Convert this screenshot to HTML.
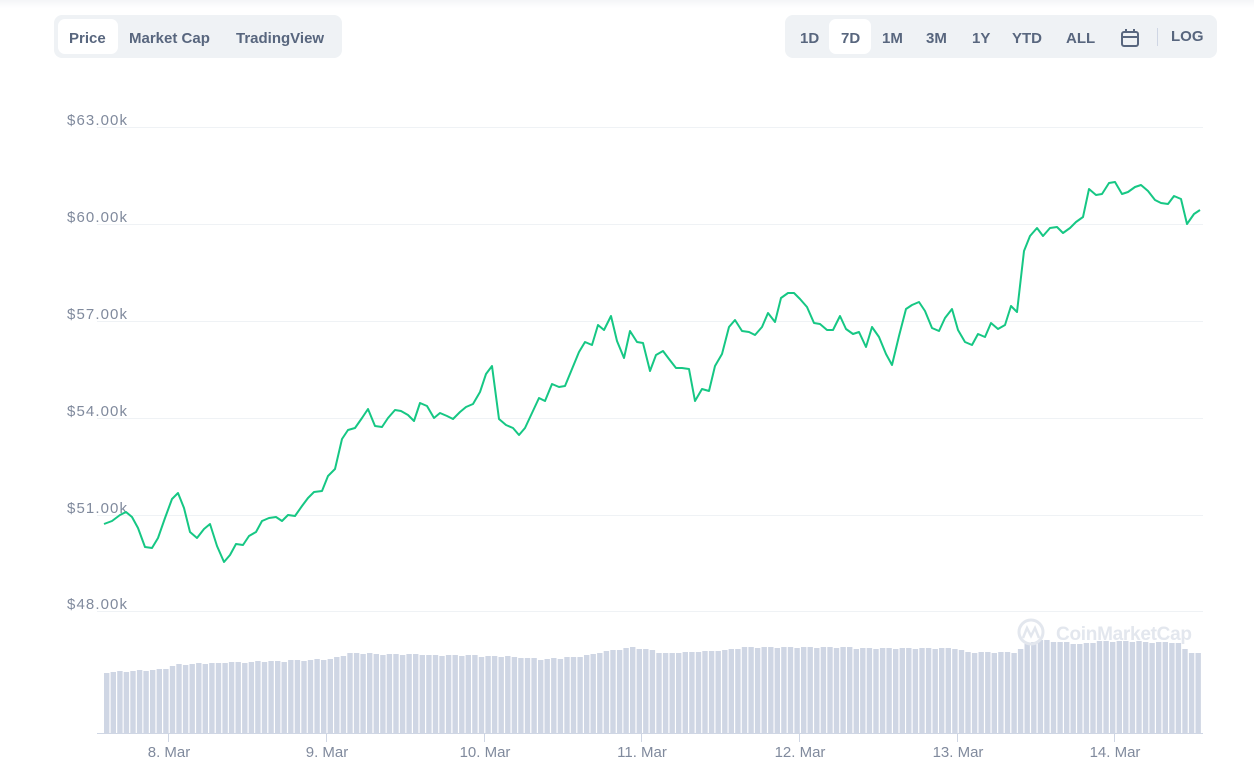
<!DOCTYPE html>
<html><head><meta charset="utf-8"><style>
body{margin:0;width:1254px;height:783px;background:#fff;font-family:"Liberation Sans",sans-serif;overflow:hidden;position:relative}
.top{position:absolute;left:0;top:0;width:1254px;height:8px;background:linear-gradient(#f4f5f7,#fff)}
.grp{position:absolute;top:15px;height:43px;background:#eff2f5;border-radius:8px}
.b{position:absolute;top:6px;font-size:15px;font-weight:bold;color:#58667e;height:35px;line-height:35px;border-radius:6px;text-align:center}
.on{position:absolute;top:4px;height:35px;background:#fff;border-radius:7px}
</style></head><body>
<div class="top"></div>
<div class="grp" style="left:54px;width:288px">
<div class="on" style="left:4px;width:60px"></div>
<div class="b" style="left:15px">Price</div><div class="b" style="left:75px">Market Cap</div><div class="b" style="left:182px">TradingView</div></div>
<div class="grp" style="left:785px;width:432px">
<div class="on" style="left:44px;width:42px"></div>
<div class="b" style="left:15px">1D</div><div class="b" style="left:56px">7D</div><div class="b" style="left:97px">1M</div><div class="b" style="left:141px">3M</div><div class="b" style="left:187px">1Y</div><div class="b" style="left:227px">YTD</div><div class="b" style="left:281px">ALL</div>
<svg width="22" height="22" viewBox="0 0 22 22" style="position:absolute;left:334px;top:12px"><rect x="3" y="5" width="16" height="14" rx="2" fill="none" stroke="#58667e" stroke-width="2"/><line x1="3" y1="10" x2="19" y2="10" stroke="#58667e" stroke-width="2"/><line x1="7" y1="2" x2="7" y2="6" stroke="#58667e" stroke-width="2"/><line x1="15" y1="2" x2="15" y2="6" stroke="#58667e" stroke-width="2"/></svg>
<div style="position:absolute;left:372px;top:13px;width:1px;height:18px;background:#cfd6e4"></div>
<div class="b" style="left:386px;top:4px">LOG</div></div>
<svg id="ch" width="1254" height="783" style="position:absolute;left:0;top:0" font-family="Liberation Sans, sans-serif">
<g stroke="#eff2f5" stroke-width="1">
<line x1="97" x2="1203" y1="127.5" y2="127.5"/><line x1="97" x2="1203" y1="224.5" y2="224.5"/><line x1="97" x2="1203" y1="321.5" y2="321.5"/><line x1="97" x2="1203" y1="418.5" y2="418.5"/><line x1="97" x2="1203" y1="515.5" y2="515.5"/><line x1="97" x2="1203" y1="611.5" y2="611.5"/></g>
<g fill="#808a9d" font-size="15">
<text x="67" y="125" textLength="60">$63.00k</text><text x="67" y="222" textLength="60">$60.00k</text><text x="67" y="319" textLength="60">$57.00k</text><text x="67" y="416" textLength="60">$54.00k</text><text x="67" y="513" textLength="60">$51.00k</text><text x="67" y="609" textLength="60">$48.00k</text></g>
<g id="bars" fill="#cfd6e4"></g>
<g fill="none" stroke="#e3e7ee" stroke-width="3"><circle cx="1031" cy="632" r="12"/></g>
<path d="M1023 638 l4 -10 4 8 4 -8 4 10" fill="none" stroke="#e3e7ee" stroke-width="2.5"/>
<text x="1056" y="640" font-size="19" fill="#e3e7ee" font-weight="bold" textLength="136">CoinMarketCap</text>
<line x1="97" x2="1203" y1="733.5" y2="733.5" stroke="#cfd6e4"/>
<g stroke="#cfd6e4"><line x1="168.5" x2="168.5" y1="733" y2="742"/><line x1="326.5" x2="326.5" y1="733" y2="742"/><line x1="484.5" x2="484.5" y1="733" y2="742"/><line x1="641.5" x2="641.5" y1="733" y2="742"/><line x1="799.5" x2="799.5" y1="733" y2="742"/><line x1="957.5" x2="957.5" y1="733" y2="742"/><line x1="1114.5" x2="1114.5" y1="733" y2="742"/></g>
<g fill="#808a9d" font-size="15" text-anchor="middle">
<text x="169" y="757">8. Mar</text><text x="327" y="757">9. Mar</text><text x="485" y="757">10. Mar</text><text x="642" y="757">11. Mar</text><text x="800" y="757">12. Mar</text><text x="958" y="757">13. Mar</text><text x="1115" y="757">14. Mar</text></g>
<polyline fill="none" stroke="#16c784" stroke-width="2" stroke-linejoin="round" points="104,524 112,521 120,515 126,512 132,517 138,528 145,547 152,548 158,538 165,518 172,499 178,493 184,508 190,532 197,538 204,529 210,524 217,546 224,562 230,555 236,544 243,545 249,536 256,532 262,521 269,518 276,517 282,521 288,515 295,516 302,506 308,498 314,492 322,491 328,476 335,469 342,439 348,430 355,428 362,418 368,409 375,426 382,427 388,418 395,410 401,411 408,415 414,421 420,403 427,406 434,418 440,413 447,416 453,419 460,412 466,407 473,404 480,392 486,374 492,366 499,419 506,425 513,428 519,435 525,428 532,413 539,398 545,401 552,384 559,387 565,386 572,369 579,352 585,342 592,345 598,325 604,330 611,316 617,341 624,358 630,331 637,342 643,343 650,371 656,355 663,351 669,359 676,368 682,368 689,369 695,401 702,389 709,391 715,366 722,354 729,327 735,320 742,331 749,332 755,335 762,327 768,313 775,322 781,298 788,293 794,293 800,299 807,307 814,323 820,324 827,330 833,330 840,316 846,329 853,334 859,332 866,347 872,327 879,337 886,354 892,365 899,336 906,309 912,305 919,302 925,311 932,328 939,331 945,318 952,309 958,330 965,342 972,345 978,334 985,337 991,323 998,329 1005,325 1011,306 1017,312 1024,251 1030,236 1037,228 1043,236 1050,228 1057,227 1063,233 1070,228 1076,222 1083,217 1089,189 1096,195 1102,194 1109,183 1115,182 1122,194 1128,192 1135,187 1141,185 1148,191 1155,200 1161,203 1168,204 1174,196 1181,199 1187,224 1194,214 1200,210"/>
</svg>
<script>
var g=document.getElementById('bars'),s='';
var ctrl=[[104,672],[160,669],[175,664],[235,662],[330,659],[345,653],[445,655],[500,656],[540,659],[570,657],[600,652],[630,647],[665,653],[720,650],[740,647],[955,648],[965,652],[1015,652],[1025,643],[1040,639],[1060,642],[1080,644],[1100,641],[1175,642],[1185,651],[1202,655]];
function h(x){for(var i=0;i<ctrl.length-1;i++){if(x<=ctrl[i+1][0]){var a=ctrl[i],b=ctrl[i+1];return a[1]+(b[1]-a[1])*(x-a[0])/(b[0]-a[0]);}}return 655;}
for(var i=0;i<167;i++){var x=104+i*6.575;var y=Math.round(h(x)+ (i%3==0?1:0));s+='<rect x="'+x.toFixed(1)+'" y="'+y+'" width="5.4" height="'+(733-y)+'"/>';}
g.innerHTML=s;
</script>
</body></html>
